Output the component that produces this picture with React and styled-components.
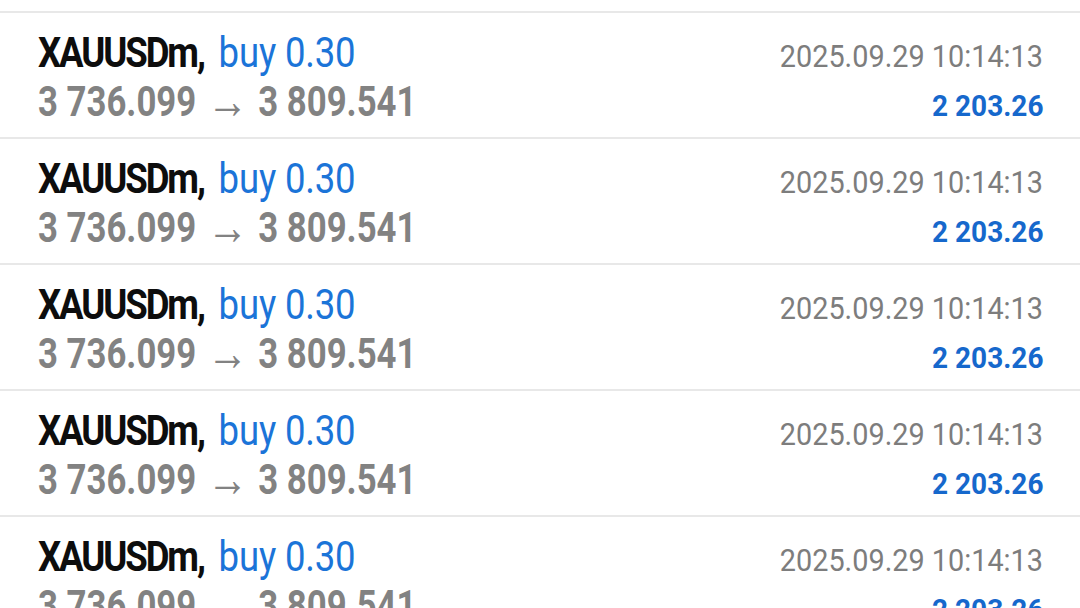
import styled, { createGlobalStyle } from "styled-components";

const GlobalStyle = createGlobalStyle`
  html, body {
    margin: 0;
    padding: 0;
    background: #ffffff;
    overflow: hidden;
  }
  body {
    font-family: Roboto, "Noto Sans", sans-serif;
  }
`;

const trades = Array.from({ length: 5 }, () => ({
  symbol: "XAUUSDm",
  side: "buy",
  volume: "0.30",
  openPrice: "3 736.099",
  closePrice: "3 809.541",
  time: "2025.09.29 10:14:13",
  profit: "2 203.26",
}));

export default function App() {
  return (
    <>
      <GlobalStyle />
      <List>
        {trades.map((trade, index) => (
          <TradeRow key={index}>
            <Cell>
              <Title>
                <Symbol>{trade.symbol},</Symbol>
                <Side>
                  {trade.side} {trade.volume}
                </Side>
              </Title>
            </Cell>
            <Cell $right>
              <Time>{trade.time}</Time>
            </Cell>
            <Cell>
              <Prices>
                {trade.openPrice}
                <Arrow>→</Arrow>
                {trade.closePrice}
              </Prices>
            </Cell>
            <Cell $right>
              <Profit>{trade.profit}</Profit>
            </Cell>
          </TradeRow>
        ))}
      </List>
    </>
  );
}

const List = styled.div`
  margin-top: 11px;
`;

const TradeRow = styled.div`
  display: grid;
  grid-template-columns: 1fr auto;
  align-items: baseline;
  height: 126px;
  box-sizing: border-box;
  padding: 17px 37px 17px 38px;
  border-top: 2px solid #e8e8e8;
`;

const Cell = styled.div`
  height: 45px;
  line-height: 45px;
  white-space: nowrap;
  text-align: ${(p) => (p.$right ? "right" : "left")};
`;

const Title = styled.span`
  display: inline-block;
  font-size: 42px;
  transform: scaleX(0.87);
  transform-origin: left center;
`;

const Symbol = styled.span`
  font-weight: 700;
  color: #0d0d0d;
  letter-spacing: -2.4px;
`;

const Side = styled.span`
  font-weight: 400;
  color: #1b74d8;
  margin-left: 17px;
  letter-spacing: -0.2px;
`;

const Prices = styled.span`
  display: inline-block;
  font-size: 42px;
  font-weight: 700;
  color: #828282;
  transform: scaleX(0.827);
  transform-origin: left center;
`;

const Arrow = styled.span`
  font-size: 50px;
  font-weight: 300;
  line-height: 0;
  margin: 0 12px 0 13px;
  vertical-align: -2px;
`;

const Time = styled.span`
  display: inline-block;
  font-size: 31px;
  color: #7d7d7d;
  transform: scaleX(0.93);
  transform-origin: right center;
`;

const Profit = styled.span`
  display: inline-block;
  font-size: 29px;
  font-weight: 700;
  color: #1668cc;
  transform: scaleX(0.965);
  transform-origin: right center;
`;
